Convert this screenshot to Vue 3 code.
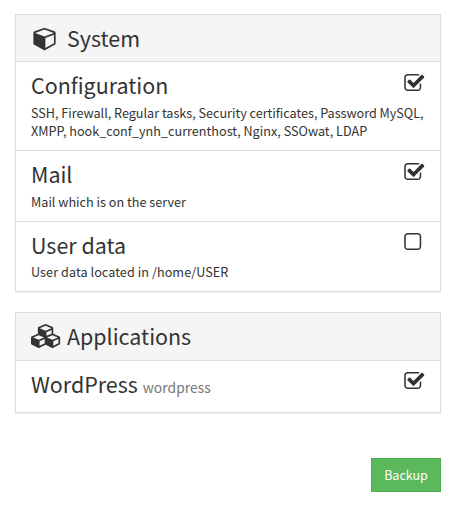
<script setup>
const groups = [
  {
    title: 'System',
    icon: 'cube',
    items: [
      {
        name: 'Configuration',
        text: [
          'SSH, Firewall, Regular tasks, Security certificates, Password MySQL,',
          'XMPP, hook_conf_ynh_currenthost, Nginx, SSOwat, LDAP',
        ],
        checked: true,
      },
      { name: 'Mail', text: ['Mail which is on the server'], checked: true },
      { name: 'User data', text: ['User data located in /home/USER'], checked: false },
    ],
  },
  {
    title: 'Applications',
    icon: 'cubes',
    items: [{ name: 'WordPress', id: 'wordpress', text: [], checked: true }],
  },
]
</script>

<template>
  <main class="page">
    <section v-for="g in groups" :key="g.title" class="panel" :class="g.icon">
      <header class="heading">
        <span class="icon-slot">
          <svg v-if="g.icon === 'cube'" class="icon-cube" viewBox="0 64 1664 1792">
            <path d="M896 1629l640-349v-636l-640 233v752zm-64-865l698-254-698-254-698 254zm832-252v768q0 35-18 65t-49 47l-704 384q-28 16-61 16t-61-16l-704-384q-31-17-49-47t-18-65v-768q0-40 23-73t61-50l704-256q22-8 44-8t44 8l704 256q38 17 61 50t23 73z" />
          </svg>
          <svg v-else class="icon-cubes" viewBox="0 0 2176 1792">
            <path d="M640 1632l384-192v-314l-384 164v342zm-64-454l404-173-404-173-404 173zm1088 454l384-192v-314l-384 164v342zm-64-454l404-173-404-173-404 173zm-448-293l384-165v-266l-384 164v267zm-64-379l441-189-441-189-441 189zm1088 518v416q0 36-19 67t-52 47l-448 224q-25 14-57 14t-57-14l-448-224q-4-2-7-4-2 2-7 4l-448 224q-25 14-57 14t-57-14l-448-224q-33-16-52-47t-19-67v-416q0-38 21.5-70t56.5-48l434-186v-400q0-38 21.5-70t56.5-48l448-192q23-10 50-10t50 10l448 192q35 16 56.5 48t21.5 70v400l434 186q36 16 57 48t21 70z" />
          </svg>
        </span>
        <h2>{{ g.title }}</h2>
      </header>
      <div v-for="item in g.items" :key="item.name" class="item">
        <div class="body">
          <h3>{{ item.name }}<small v-if="item.id">{{ item.id }}</small></h3>
          <p v-for="line in item.text" :key="line">{{ line }}</p>
        </div>
        <svg class="check" viewBox="192 128 1536 1408">
          <path v-if="item.checked" d="M1600 930v318q0 119-84.5 203.5t-203.5 84.5h-832q-119 0-203.5-84.5t-84.5-203.5v-832q0-119 84.5-203.5t203.5-84.5h832q63 0 117 25 15 7 18 23 3 17-9 29l-49 49q-10 10-23 10-3 0-9-2-23-6-45-6h-832q-66 0-113 47t-47 113v832q0 66 47 113t113 47h832q66 0 113-47t47-113v-254q0-13 9-22l64-64q10-10 23-10 6 0 12 3 20 8 20 29zm231-489l-814 814q-24 24-57 24t-57-24l-430-430q-24-24-24-57t24-57l110-110q24-24 57-24t57 24l263 263 647-647q24-24 57-24t57 24l110 110q24 24 24 57t-24 57z" />
          <path v-else d="M1312 256h-832q-66 0-113 47t-47 113v832q0 66 47 113t113 47h832q66 0 113-47t47-113v-832q0-66-47-113t-113-47zm288 160v832q0 119-84.5 203.5t-203.5 84.5h-832q-119 0-203.5-84.5t-84.5-203.5v-832q0-119 84.5-203.5t203.5-84.5h832q119 0 203.5 84.5t84.5 203.5z" />
        </svg>
      </div>
    </section>
    <div class="actions"><button type="button">Backup</button></div>
  </main>
</template>

<style>
body {
  margin: 0;
  background: #fff;
}
</style>

<style scoped>
.page {
  box-sizing: border-box;
  width: 456px;
  height: 505px;
  padding: 14px 15px 0;
  color: #333;
  font-family: "Noto Sans CJK SC", "Noto Sans", sans-serif;
}
.panel {
  border: 1px solid #ddd;
  margin-bottom: 20px;
  box-shadow: 0 1px 1px rgba(0, 0, 0, 0.05);
}
.heading {
  display: flex;
  align-items: center;
  height: 46px;
  padding: 0 15px;
  background: #f5f5f5;
}
.cubes .heading {
  height: 47px;
}
h2,
h3,
p {
  margin: 0;
  font-weight: 400;
  white-space: nowrap;
}
h2,
h3 {
  font-size: 21.45px;
  line-height: 26px;
}
.cubes h2 {
  padding-bottom: 2px;
}
.icon-slot {
  display: flex;
  justify-content: center;
  width: 36px;
}
svg {
  display: block;
  fill: #333;
  overflow: visible;
}
.icon-cube {
  width: 23px;
  height: 24px;
  margin: 2px 8.6px 0 0;
}
.icon-cubes {
  width: 30px;
  height: 24px;
  margin: 0 7px 1px 0;
}
.item {
  display: flex;
  justify-content: space-between;
  box-sizing: border-box;
  height: 71px;
  padding: 10px 17px 0 15px;
  border-top: 1px solid #ddd;
}
.cube .item:nth-child(2) {
  height: 89px;
}
.cube .item:last-child {
  height: 70px;
}
.cube .item:last-child p {
  margin-top: -1px;
  letter-spacing: 0.06px;
}
.cubes .item {
  height: 52px;
}
.body {
  flex: 1;
  min-width: 0;
}
h3 {
  margin: 0 0 6px;
}
small {
  margin-left: 5px;
  color: #777;
  font-size: 13.9px;
}
p {
  font-size: 12.65px;
  line-height: 18px;
}
.cube .item:nth-child(2) p:nth-child(2) {
  letter-spacing: -0.02px;
}
.check {
  flex: none;
  width: 19px;
  height: 17px;
  margin-top: 2px;
}
.item:last-child .check {
  margin-top: 1px;
}
.actions {
  display: flex;
  justify-content: flex-end;
  margin-top: 45px;
}
button {
  width: 70px;
  height: 34px;
  padding: 0;
  border: 1px solid #4cae4c;
  background: #5cb85c;
  color: #fff;
  font: 12.5px/20px "Noto Sans CJK SC", sans-serif;
}
</style>
